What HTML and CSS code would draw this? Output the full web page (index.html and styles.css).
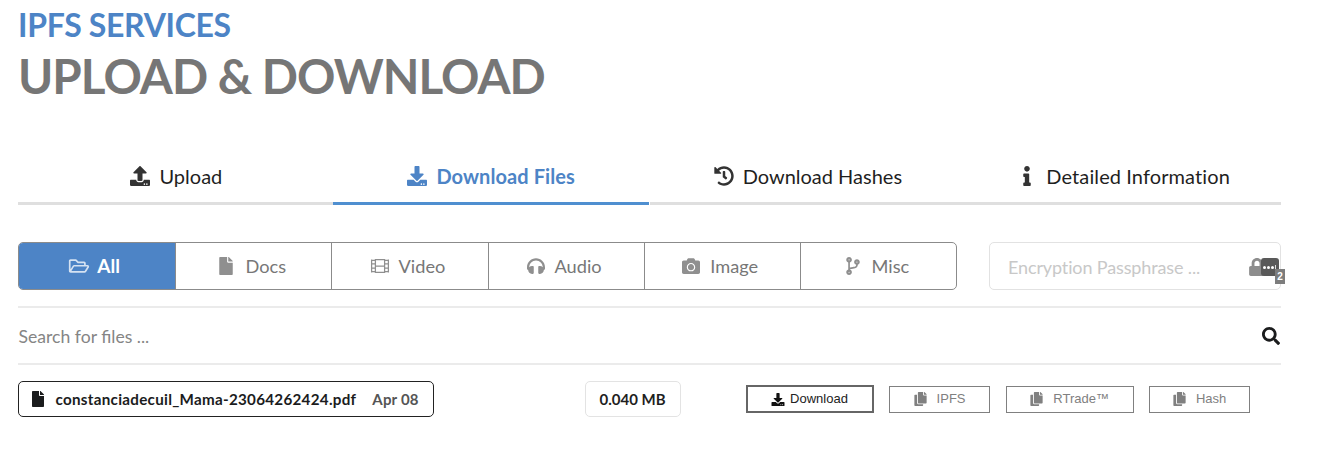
FILE: index.html
```html
<!DOCTYPE html>
<html lang="en">
<head>
<meta charset="utf-8">
<title>IPFS Services</title>
<link rel="stylesheet" href="styles.css">
</head>
<body>
<svg class="sprite" width="0" height="0">
<symbol id="download" viewBox="0 0 512 512"><path d="M216 0h80c13.3 0 24 10.7 24 24v168h87.7c17.8 0 26.7 21.5 14.1 34.1L269.7 378.3c-7.5 7.5-19.8 7.5-27.3 0L90.1 226.1c-12.6-12.6-3.7-34.1 14.1-34.1H192V24c0-13.3 10.7-24 24-24zm296 376v112c0 13.3-10.7 24-24 24H24c-13.3 0-24-10.7-24-24V376c0-13.3 10.7-24 24-24h146.7l49 49c20.1 20.1 52.5 20.1 72.6 0l49-49H488c13.3 0 24 10.7 24 24zm-124 88c0-11-9-20-20-20s-20 9-20 20 9 20 20 20 20-9 20-20zm64 0c0-11-9-20-20-20s-20 9-20 20 9 20 20 20 20-9 20-20z"/></symbol>
<symbol id="upload" viewBox="0 0 512 512"><path d="M296 384h-80c-13.3 0-24-10.7-24-24V192h-87.7c-17.8 0-26.7-21.5-14.1-34.1L242.3 5.7c7.5-7.5 19.8-7.5 27.3 0l152.2 152.2c12.6 12.6 3.7 34.1-14.1 34.1H320v168c0 13.3-10.7 24-24 24zm216-8v112c0 13.3-10.7 24-24 24H24c-13.3 0-24-10.7-24-24V376c0-13.3 10.7-24 24-24h136v8c0 30.9 25.1 56 56 56h80c30.9 0 56-25.1 56-56v-8h136c13.3 0 24 10.7 24 24zm-124 88c0-11-9-20-20-20s-20 9-20 20 9 20 20 20 20-9 20-20zm64 0c0-11-9-20-20-20s-20 9-20 20 9 20 20 20 20-9 20-20z"/></symbol>
<symbol id="history" viewBox="0 0 512 512"><path d="M504 255.531c.253 136.64-111.18 248.372-247.82 248.468-59.015.042-113.223-20.53-155.822-54.911-11.077-8.94-11.905-25.541-1.839-35.607l11.267-11.267c8.609-8.609 22.353-9.551 31.891-1.984C173.062 425.135 212.781 440 256 440c101.705 0 184-82.311 184-184 0-101.705-82.311-184-184-184-48.814 0-93.149 18.969-126.068 49.932l50.754 50.754c10.08 10.08 2.941 27.314-11.313 27.314H24c-8.837 0-16-7.163-16-16V38.627c0-14.254 17.234-21.393 27.314-11.314l49.372 49.372C129.209 34.136 189.552 8 256 8c136.81 0 247.747 110.78 248 247.531zm-180.912 78.784l9.823-12.63c8.138-10.463 6.253-25.542-4.21-33.679L288 256.349V152c0-13.255-10.745-24-24-24h-16c-13.255 0-24 10.745-24 24v135.651l65.409 50.874c10.463 8.137 25.541 6.253 33.679-4.21z"/></symbol>
<symbol id="info" viewBox="0 0 192 512"><path d="M20 424.229h20V279.771H20c-11.046 0-20-8.954-20-20V212c0-11.046 8.954-20 20-20h112c11.046 0 20 8.954 20 20v212.229h20c11.046 0 20 8.954 20 20V492c0 11.046-8.954 20-20 20H20c-11.046 0-20-8.954-20-20v-47.771c0-11.046 8.954-20 20-20zM96 0C56.235 0 24 32.235 24 72s32.235 72 72 72 72-32.235 72-72S135.764 0 96 0z"/></symbol>
<symbol id="folder" viewBox="0 0 576 512"><path d="M527.9 224H480v-48c0-26.5-21.5-48-48-48H272l-64-64H48C21.5 64 0 85.5 0 112v288c0 26.5 21.5 48 48 48h400c16.5 0 31.9-8.5 40.7-22.6l79.9-128c20-31.9-3-73.4-40.7-73.4zM48 118c0-3.3 2.7-6 6-6h134.1l64 64H426c3.3 0 6 2.7 6 6v42H152c-16.8 0-32.4 8.8-41.1 23.2L48 351.4zm400 282H72l77.2-128H528z"/></symbol>
<symbol id="file" viewBox="0 0 384 512"><path d="M224 136V0H24C10.7 0 0 10.7 0 24v464c0 13.3 10.7 24 24 24h336c13.3 0 24-10.7 24-24V160H248c-13.2 0-24-10.8-24-24zm160-14.1v6.1H256V0h6.1c6.4 0 12.5 2.5 17 7l97.9 98c4.5 4.5 7 10.6 7 16.9z"/></symbol>
<symbol id="film" viewBox="0 0 18 18"><path fill="none" stroke="currentColor" stroke-width="1.25" d="M.6 2.6v12.8M17.4 2.6v12.8M4.4 2.6h9.2v12.8H4.4zM4.4 9h9.2M.6 3.3h3.8M.6 6.9h3.8M.6 11.1h3.8M.6 14.7h3.8M13.6 3.3h3.8M13.6 6.9h3.8M13.6 11.1h3.8M13.6 14.7h3.8"/></symbol>
<symbol id="headphones" viewBox="0 0 512 512"><path d="M256 32C114.52 32 0 146.497 0 288v48a32 32 0 0 0 17.689 28.622l14.383 7.191C34.083 431.903 83.421 480 144 480h24c13.255 0 24-10.745 24-24V280c0-13.255-10.745-24-24-24h-24c-31.342 0-59.671 12.879-80 33.627V288c0-105.869 86.131-192 192-192s192 86.131 192 192v1.627C427.671 268.879 399.342 256 368 256h-24c-13.255 0-24 10.745-24 24v176c0 13.255 10.745 24 24 24h24c60.579 0 109.917-48.098 111.928-108.187l14.382-7.191A32 32 0 0 0 512 336v-48c0-141.479-114.496-256-256-256z"/></symbol>
<symbol id="camera" viewBox="0 0 512 512"><path d="M512 144v288c0 26.5-21.5 48-48 48H48c-26.5 0-48-21.5-48-48V144c0-26.5 21.5-48 48-48h88l12.3-32.9c7-18.7 24.9-31.1 44.9-31.1h125.5c20 0 37.9 12.4 44.9 31.1L376 96h88c26.5 0 48 21.5 48 48zM376 288c0-66.2-53.8-120-120-120s-120 53.8-120 120 53.8 120 120 120 120-53.8 120-120zm-32 0c0 48.5-39.5 88-88 88s-88-39.5-88-88 39.5-88 88-88 88 39.5 88 88z"/></symbol>
<symbol id="branch" viewBox="0 0 384 512"><path d="M384 144c0-44.2-35.8-80-80-80s-80 35.8-80 80c0 36.4 24.3 67.1 57.5 76.8-.6 16.1-4.2 28.5-11 36.9-15.4 19.2-49.3 22.4-85.2 25.7-28.2 2.6-57.4 5.4-81.3 16.9v-144c32.5-10.2 56-40.5 56-76.3 0-44.2-35.8-80-80-80S0 35.8 0 80c0 35.8 23.5 66.1 56 76.3v199.3C23.5 365.9 0 396.2 0 432c0 44.2 35.8 80 80 80s80-35.8 80-80c0-34-21.2-63.1-51.2-74.6 3.1-5.2 7.8-9.8 14.9-13.4 16.2-8.2 40.4-10.4 66.1-12.8 42.2-3.9 90-8.4 118.2-43.4 14-17.4 21.1-39.8 21.6-67.9 31.6-10.8 54.4-40.7 54.4-75.9zM80 64c8.8 0 16 7.2 16 16s-7.2 16-16 16-16-7.2-16-16 7.2-16 16-16zm0 384c-8.8 0-16-7.2-16-16s7.2-16 16-16 16 7.2 16 16-7.2 16-16 16zm224-320c8.8 0 16 7.2 16 16s-7.2 16-16 16-16-7.2-16-16 7.2-16 16-16z"/></symbol>
<symbol id="lock" viewBox="0 0 448 512"><path d="M400 224h-24v-72C376 68.2 307.8 0 224 0S72 68.2 72 152v72H48c-26.5 0-48 21.5-48 48v192c0 26.5 21.5 48 48 48h352c26.5 0 48-21.5 48-48V272c0-26.5-21.5-48-48-48zm-104 0H152v-72c0-39.7 32.3-72 72-72s72 32.3 72 72v72z"/></symbol>
<symbol id="search" viewBox="0 0 512 512"><path d="M505 442.7L405.3 343c-4.5-4.5-10.6-7-17-7H372c27.6-35.3 44-79.7 44-128C416 93.1 322.9 0 208 0S0 93.1 0 208s93.1 208 208 208c48.3 0 92.7-16.4 128-44v16.3c0 6.4 2.5 12.5 7 17l99.7 99.7c9.4 9.4 24.6 9.4 33.9 0l28.3-28.3c9.4-9.4 9.4-24.6.1-34zM208 336c-70.7 0-128-57.2-128-128 0-70.7 57.2-128 128-128 70.7 0 128 57.2 128 128 0 70.7-57.2 128-128 128z"/></symbol>
<symbol id="copy" viewBox="0 0 448 512"><path d="M320 448v40c0 13.255-10.745 24-24 24H24c-13.255 0-24-10.745-24-24V120c0-13.255 10.745-24 24-24h72v296c0 30.879 25.121 56 56 56h168zm0-344V0H152c-13.255 0-24 10.745-24 24v368c0 13.255 10.745 24 24 24h272c13.255 0 24-10.745 24-24V128H344c-13.2 0-24-10.8-24-24zm120.971-31.029L375.029 7.029A24 24 0 0 0 358.059 0H352v96h96v-6.059a24 24 0 0 0-7.029-16.97z"/></symbol>
</svg>
<main class="page">
  <header class="heading">
    <h2 class="eyebrow">IPFS SERVICES</h2>
    <h1 class="title">UPLOAD &amp; DOWNLOAD</h1>
  </header>

  <nav class="tabs">
    <a class="tab"><svg class="icon"><use href="#upload"/></svg><span>Upload</span></a>
    <a class="tab active"><svg class="icon"><use href="#download"/></svg><span>Download Files</span></a>
    <a class="tab"><svg class="icon"><use href="#history"/></svg><span>Download Hashes</span></a>
    <a class="tab detail"><svg class="icon"><use href="#info"/></svg><span>Detailed Information</span></a>
  </nav>

  <section class="filters">
    <div class="group">
      <button class="filter active"><svg class="icon"><use href="#folder"/></svg><span>All</span></button>
      <button class="filter"><svg class="icon"><use href="#file"/></svg><span>Docs</span></button>
      <button class="filter"><svg class="icon"><use href="#film"/></svg><span>Video</span></button>
      <button class="filter"><svg class="icon"><use href="#headphones"/></svg><span>Audio</span></button>
      <button class="filter"><svg class="icon"><use href="#camera"/></svg><span>Image</span></button>
      <button class="filter"><svg class="icon"><use href="#branch"/></svg><span>Misc</span></button>
    </div>
    <div class="passphrase">
      <span>Encryption Passphrase ...</span>
      <svg class="lock"><use href="#lock"/></svg>
      <div class="manager"><i></i><i></i><i></i><b></b><span class="count">2</span></div>
    </div>
  </section>

  <section class="search">
    <span>Search for files ...</span>
    <svg class="search-icon"><use href="#search"/></svg>
  </section>

  <section class="row">
    <div class="file"><svg class="file-icon"><use href="#file"/></svg><span class="name">constanciadecuil_Mama-23064262424.pdf</span><span class="date">Apr 08</span></div>
    <div class="size">0.040 MB</div>
    <div class="actions">
      <button class="action primary"><svg class="icon"><use href="#download"/></svg><span>Download</span></button>
      <button class="action"><svg class="icon"><use href="#copy"/></svg><span>IPFS</span></button>
      <button class="action wide"><svg class="icon"><use href="#copy"/></svg><span>RTrade™</span></button>
      <button class="action"><svg class="icon"><use href="#copy"/></svg><span>Hash</span></button>
    </div>
  </section>
</main>
</body>
</html>
```
FILE: styles.css
```css
* { box-sizing: border-box; }
body { margin: 0; background: #fff; color: #1f1f1f; font-family: Lato, "Liberation Sans", sans-serif; overflow: hidden; }
svg { display: block; fill: currentColor; flex: none; }
.sprite { position: absolute; }
button { font: inherit; background: none; margin: 0; }
.page { width: 1281px; padding-left: 18px; }

.heading { height: 150px; padding-top: 5px; }
.eyebrow { margin: 0; font-size: 32px; line-height: 40px; letter-spacing: -0.33px; color: #4d84c6; }
.title { margin: 0; font-size: 47.6px; line-height: 61px; letter-spacing: -0.97px; color: #767676; }

.tabs { display: grid; grid-template-columns: repeat(4, 1fr); height: 55px; }
.tab { display: flex; justify-content: center; align-items: center; gap: 8px; border-bottom: 3px solid #dfdfdf; font-size: 20px; line-height: 24px; font-variant-ligatures: none; }
.tab .icon { width: 22px; height: 20px; color: #333; }
.tab.active { margin: 0 1px 0 -1px; letter-spacing: 0.08px; color: #4d84c6; border-color: #4f8fd0; font-weight: 700; }
.tab.active .icon { color: #4d84c6; }
.tab.detail { letter-spacing: 0.1px; }

.filters { display: flex; justify-content: space-between; height: 101px; padding-top: 37px; }
.group { display: grid; grid-template-columns: repeat(6, 1fr); width: 939px; height: 48px; border: 1px solid #8b8b8b; border-radius: 5px; overflow: hidden; }
.filter { display: flex; justify-content: center; align-items: center; gap: 8px; padding: 0 6px 0 0; border: 0; border-left: 1px solid #8b8b8b; font-size: 18.2px; line-height: 24px; color: #777; }
.filter span { padding-bottom: 1px; }
.filter .icon { width: 22px; height: 18px; color: #8f8f8f; }
.filter.active { margin: -1px 0 -1px -1px; gap: 7px; padding-right: 5px; border-left: 0; background: #4d84c6; color: #fff; font-size: 19px; font-weight: 700; }
.filter.active .icon { color: #d5e2f2; }

.passphrase { position: relative; display: flex; align-items: center; justify-content: space-between; width: 292px; height: 48px; padding: 1px 15px 0 18px; border: 1px solid #e2e2e2; border-radius: 5px; font-size: 18px; letter-spacing: -0.13px; color: #c8c8c8; }
.lock { width: 16px; height: 18px; color: #8d8d8d; }
.manager { position: absolute; right: 1px; top: 15px; display: flex; align-items: center; gap: 1px; width: 18px; height: 18px; padding-left: 2px; border-radius: 3px; background: #595959; }
.manager i { width: 3px; height: 3px; border-radius: 50%; background: #fff; }
.manager b { width: 1px; height: 5px; background: #ddd; }
.count { position: absolute; left: 14px; top: 11px; width: 10px; height: 15px; background: #7d7d7d; color: #fff; font: 700 10px/15px "Liberation Sans", sans-serif; text-align: center; }

.search { display: flex; align-items: center; justify-content: space-between; height: 59px; padding: 1px 1px 0 0.5px; border-top: 2px solid #ebebeb; border-bottom: 2px solid #ebebeb; font-size: 17.6px; color: #858585; }
.search-icon { width: 18px; height: 18px; color: #1b1c1d; }

.row { display: flex; align-items: center; padding-top: 16px; font-size: 15px; font-weight: 700; }
.file { display: flex; align-items: center; width: 416px; height: 36px; padding-left: 13px; border: 1px solid #222; border-radius: 5px; color: #1b1c1d; }
.file-icon { width: 12px; height: 16px; }
.name { margin-left: 11.5px; font-size: 15.2px; letter-spacing: 0.28px; }
.date { margin-left: 16px; letter-spacing: 0.2px; color: #555; }
.size { width: 96px; height: 36px; margin-left: 150.5px; border: 1px solid #e3e3e3; border-radius: 5px; text-align: center; line-height: 35px; }
.actions { display: flex; align-items: center; gap: 15.3px; margin-left: 65px; }
.action { display: flex; align-items: center; justify-content: center; gap: 10px; width: 101.5px; height: 27px; padding: 0; border: 1px solid #808080; font: 13px/16px "Liberation Sans", sans-serif; color: #808080; }
.action .icon { width: 13px; height: 14px; }
.action.wide { width: 128px; }
.action.primary { width: 128px; height: 28px; border: 2px solid #666; gap: 5px; color: #222; }
.action.primary .icon { width: 14px; height: 13px; color: #111; }
```
